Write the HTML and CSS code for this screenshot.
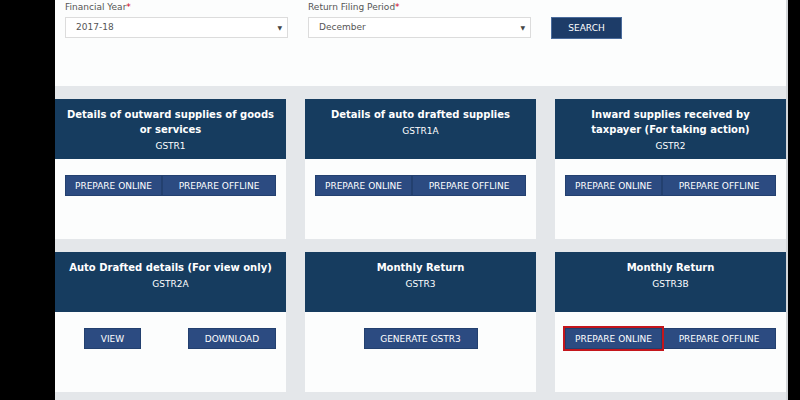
FILE: index.html
```html
<!DOCTYPE html>
<html lang="en">
<head>
    <meta charset="UTF-8">
    <title>Returns Dashboard</title>
    <link rel="stylesheet" href="styles.css">
</head>
<body>
    <div class="page">
        <form class="filters">
            <div class="field">
                <label for="fy">Financial Year<span class="req">*</span></label>
                <div class="select-box" id="fy">2017-18<span class="caret">&#9660;</span></div>
            </div>
            <div class="field">
                <label for="period">Return Filing Period<span class="req">*</span></label>
                <div class="select-box" id="period">December<span class="caret">&#9660;</span></div>
            </div>
            <button type="button" class="search">SEARCH</button>
        </form>

        <div class="cards">
            <div class="card">
                <div class="card-head">
                    <div class="card-title">Details of outward supplies of goods or services</div>
                    <div class="card-code">GSTR1</div>
                </div>
                <div class="card-body">
                    <div class="btn-group">
                        <button class="btn online">PREPARE ONLINE</button>
                        <button class="btn offline">PREPARE OFFLINE</button>
                    </div>
                </div>
            </div>

            <div class="card">
                <div class="card-head">
                    <div class="card-title">Details of auto drafted supplies</div>
                    <div class="card-code">GSTR1A</div>
                </div>
                <div class="card-body">
                    <div class="btn-group">
                        <button class="btn online">PREPARE ONLINE</button>
                        <button class="btn offline">PREPARE OFFLINE</button>
                    </div>
                </div>
            </div>

            <div class="card">
                <div class="card-head">
                    <div class="card-title">Inward supplies received by<br>taxpayer (For taking action)</div>
                    <div class="card-code">GSTR2</div>
                </div>
                <div class="card-body">
                    <div class="btn-group">
                        <button class="btn online">PREPARE ONLINE</button>
                        <button class="btn offline">PREPARE OFFLINE</button>
                    </div>
                </div>
            </div>

            <div class="card">
                <div class="card-head">
                    <div class="card-title">Auto Drafted details (For view only)</div>
                    <div class="card-code">GSTR2A</div>
                </div>
                <div class="card-body split">
                    <button class="btn view">VIEW</button>
                    <button class="btn download">DOWNLOAD</button>
                </div>
            </div>

            <div class="card">
                <div class="card-head">
                    <div class="card-title">Monthly Return</div>
                    <div class="card-code">GSTR3</div>
                </div>
                <div class="card-body center">
                    <button class="btn generate">GENERATE GSTR3</button>
                </div>
            </div>

            <div class="card">
                <div class="card-head">
                    <div class="card-title">Monthly Return</div>
                    <div class="card-code">GSTR3B</div>
                </div>
                <div class="card-body">
                    <div class="btn-group">
                        <button class="btn online highlight">PREPARE ONLINE</button>
                        <button class="btn offline">PREPARE OFFLINE</button>
                    </div>
                </div>
            </div>
        </div>
    </div>
</body>
</html>
```

FILE: styles.css
```css
body {
    margin: 0;
    background: #000;
    font-family: "DejaVu Sans", Verdana, sans-serif;
    height: 400px;
    overflow: hidden;
}

.page {
    margin-left: 55px;
    width: 731px;
    height: 400px;
    background: #e4e7ea;
    border-right: 2px solid #d3d6d9;
}

.filters {
    background: #fcfdfd;
    height: 86px;
    margin: 0;
    padding-left: 10px;
    display: flex;
    gap: 20px;
}

.field {
    width: 223px;
}

.field label {
    display: block;
    font-size: 9px;
    line-height: 12px;
    margin-top: 1px;
    color: #555;
}

.req {
    color: #d0021b;
}

.select-box {
    margin-top: 4px;
    height: 19px;
    line-height: 19px;
    border: 1px solid #dcdcdc;
    background: #fff;
    font-size: 9px;
    color: #555;
    padding-left: 10px;
    position: relative;
}

.caret {
    position: absolute;
    right: 5px;
    top: 0;
    font-size: 6px;
    color: #444;
}

.search {
    margin-top: 17px;
    width: 71px;
    height: 22px;
    background: #1d3c68;
    border: 1px solid #4b6c9c;
    color: #fff;
    font-family: inherit;
    font-size: 9px;
    padding: 0;
}

.cards {
    display: grid;
    grid-template-columns: repeat(3, 231px);
    column-gap: 19px;
    row-gap: 13px;
    padding-top: 13px;
}

.card-head {
    background: #163c5f;
    height: 52px;
    padding-top: 8px;
    color: #fff;
    text-align: center;
}

.card-title {
    font-size: 10px;
    font-weight: bold;
    line-height: 15px;
    padding: 0 6px;
}

.card-code {
    font-size: 9px;
    line-height: 15px;
    margin-top: 2px;
}

.card-body {
    background: #fcfdfd;
    height: 64px;
    padding-top: 16px;
}

.card-body.split {
    display: flex;
    justify-content: space-between;
    align-items: flex-start;
    padding-left: 29px;
    padding-right: 10px;
}

.card-body.center {
    display: flex;
    justify-content: center;
    align-items: flex-start;
}

.btn-group {
    display: flex;
    margin: 0 10px;
}

.btn {
    height: 21px;
    padding: 0;
    background: #2c4b81;
    border: 1px solid #23406f;
    color: #fff;
    font-family: inherit;
    font-size: 9px;
}

.online {
    width: 97px;
}

.offline {
    width: 114px;
}

.view {
    width: 57px;
}

.download {
    width: 88px;
}

.generate {
    width: 114px;
}

.highlight {
    outline: 2px solid #c4161c;
    outline-offset: 0;
    position: relative;
}
```
